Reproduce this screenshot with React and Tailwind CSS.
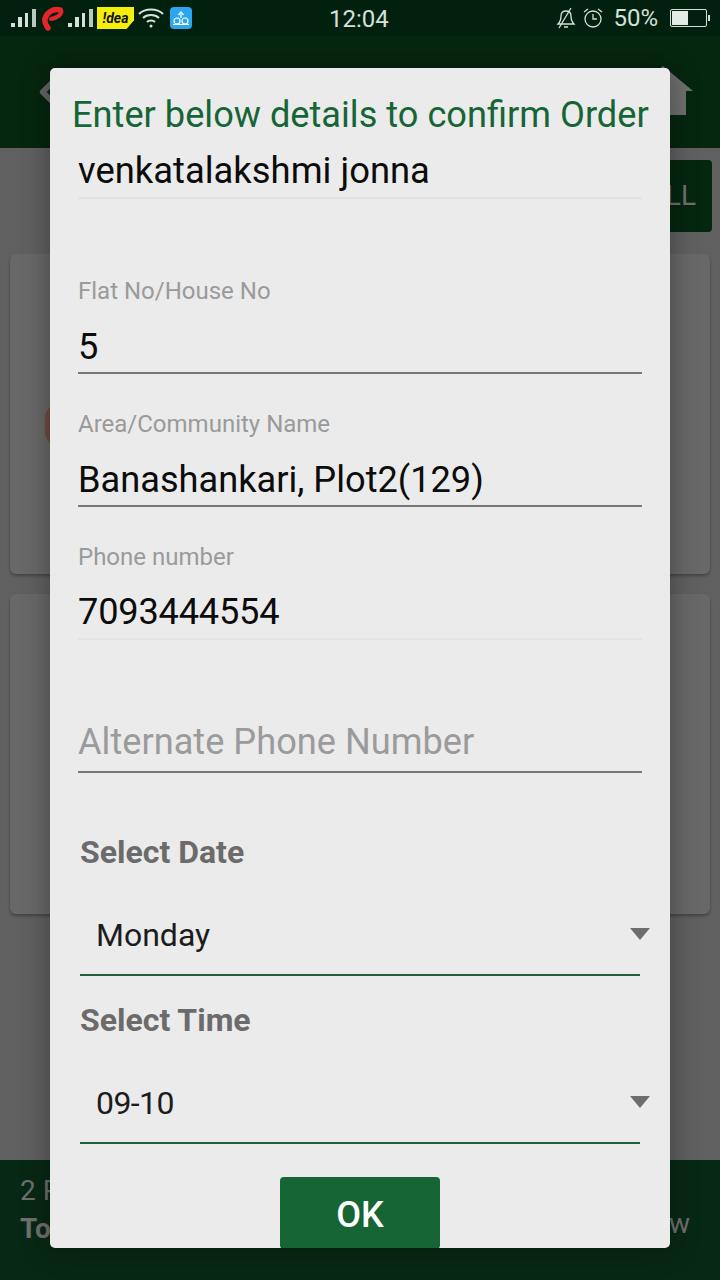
import { ChevronLeft } from 'lucide-react';

const roboto = { fontFamily: 'Roboto, sans-serif' };

function Signal() {
    return (
        <svg width="26" height="20" viewBox="0 0 26 20" fill="#d5e0da">
            <rect x="0" y="15" width="4" height="4" />
            <rect x="7" y="9" width="4" height="10" />
            <rect x="14" y="5" width="3" height="14" />
            <rect x="21" y="1" width="4" height="18" fill="#b9c9c0" />
        </svg>
    );
}

function Airtel() {
    return (
        <svg width="24" height="26" viewBox="0 0 24 26" fill="none" stroke="#e3262b" strokeLinecap="round">
            <path d="M19 5C12 3 5 8 4 14c-1 4 1 6 3 9" strokeWidth="5.5" />
            <path d="M20 5c2 4-4 8-10 9" strokeWidth="4" />
        </svg>
    );
}

function StatusBar() {
    return (
        <div className="h-9 bg-[#02200e] flex items-center justify-between pl-[11px] pr-[10px] shrink-0">
            <div className="flex items-center w-[240px]">
                <Signal />
                <div className="ml-[4px]"><Airtel /></div>
                <div className="ml-[3px]"><Signal /></div>
                <div className="ml-[3px] w-[37px] h-[22px] bg-[#f5ee0a] [clip-path:polygon(0_0,100%_0,100%_60%,80%_100%,0_100%)] flex items-center justify-center text-[14px] font-bold italic text-[#111]" style={roboto}>!dea</div>
                <svg className="ml-[4px]" width="26" height="20" viewBox="0 0 26 20" fill="none" stroke="#d5e0da" strokeWidth="2">
                    <path d="M1 6C7 0 19 0 25 6" />
                    <path d="M5 10c4-4 12-4 16 0" />
                    <path d="M9 14c2-2 6-2 8 0" />
                    <circle cx="13" cy="18" r="1.5" fill="#d5e0da" stroke="none" />
                </svg>
                <div className="ml-[6px] w-[22px] h-[22px] bg-[#2aa7ee] rounded-[4px] flex items-center justify-center">
                    <svg width="18" height="16" viewBox="0 0 18 16" fill="none" stroke="#fff" strokeWidth="1.2">
                        <circle cx="5" cy="11" r="3" />
                        <circle cx="13" cy="11" r="3" />
                        <path d="M1 14.5h16M9 8V4M6.5 5L9 2l2.5 3" />
                    </svg>
                </div>
            </div>
            <span className="text-[24px] text-[#d5e0da] absolute left-[329px] top-[1px]" style={roboto}>12:04</span>
            <div className="flex items-center">
                <svg width="20" height="22" viewBox="0 0 20 22" fill="none" stroke="#d5e0da" strokeWidth="1.3">
                    <path d="M2 17c2-2 3-4 3-8 0-3 2-5 5-5s5 2 5 5c0 4 1 6 3 8z" />
                    <path d="M8 20h4M3 21L15 1" />
                </svg>
                <svg className="ml-[7px]" width="20" height="22" viewBox="0 0 20 22" fill="none" stroke="#d5e0da" strokeWidth="1.3">
                    <circle cx="10" cy="12" r="8" />
                    <path d="M10 7v5h4M1 5l4-3M19 5l-4-3" />
                </svg>
                <span className="ml-[10px] text-[24px] text-[#d5e0da]" style={roboto}>50%</span>
                <div className="ml-[12px] w-[37px] h-[18px] border border-[#d5e0da] rounded-[2px] p-[1px]">
                    <div className="w-[16px] h-full bg-[#e3ebe6]" />
                </div>
                <div className="ml-[1px] w-[2px] h-[6px] bg-[#d5e0da]" />
            </div>
        </div>
    );
}

function Card({ thumb }) {
    return (
        <div className="h-[320px] rounded-[6px] bg-[#686868] shadow-[0_2px_3px_rgba(0,0,0,0.3)] flex items-center">
            {thumb && <div className="ml-[35px] mt-[22px] w-[30px] h-[44px] rounded-full bg-[#6e4b42]" />}
        </div>
    );
}

// the order screen that sits dimmed behind the dialog
function BackPage() {
    return (
        <div className="h-full flex flex-col">
            <StatusBar />
            <div className="h-[112px] bg-[#05260f] flex items-center justify-between pl-[30px] pr-[27px] shrink-0">
                <ChevronLeft className="text-[#666]" size={34} strokeWidth={4} />
                <svg width="60" height="49" viewBox="0 0 60 49" fill="#6f6f6f" className="mb-[3px]">
                    <path d="M30 0L60 25H53V49H7V25H0z" />
                </svg>
            </div>
            <div className="flex-1 bg-[#606060] flex flex-col">
                <div className="h-[106px] pt-[12px] pr-[8px] flex justify-end shrink-0">
                    <div className="w-[120px] h-[72px] bg-[#05260f] rounded-[4px] text-[#6f6f6f] text-[28px] flex items-center justify-end pr-[16px]" style={roboto}>CALL</div>
                </div>
                <div className="px-[10px] flex flex-col gap-[20px]">
                    <Card thumb />
                    <Card />
                </div>
            </div>
            <div className="h-[120px] bg-[#072814] shrink-0 pl-[20px] pr-[30px] pt-[12px] flex justify-between items-center" style={roboto}>
                <div className="text-[#6f6f6f] -mt-[32px]">
                    <div className="text-[28px] leading-[38px]">2 Products</div>
                    <div className="text-[28px] leading-[38px] font-bold">Total</div>
                </div>
                <div className="text-[#6f6f6f] text-[28px] -mt-[4px]">Order Now</div>
            </div>
        </div>
    );
}

function Field({ label, value, dark, valueClass }) {
    return (
        <div className="mx-[28px] h-[133px] flex flex-col justify-end">
            <div className="mb-[11px] text-[24px] leading-[28px] text-[#9a9a9a]">{label}</div>
            <div className={`pb-[2px] h-[58px] flex items-end text-[36.2px] leading-[46px] text-[#0c0c0c] border-b-2 ${dark ? 'border-[#777]' : 'border-[#e3e3e3]'} ${valueClass || ''}`}>{value}</div>
        </div>
    );
}

function SelectField({ label, value, labelMt, valueClass }) {
    return (
        <div className="mx-[30px]">
            <div className={`text-[32px] leading-[40px] font-bold text-[#6b6b6b] ${labelMt}`}>{label}</div>
            <div className="mt-[24px] h-[80px] pl-[16px] flex items-center border-b-2 border-[#1f5f3a] text-[#1c1c1c] text-[32px] relative">
                <span className={valueClass}>{value}</span>
                <svg width="20" height="12" viewBox="0 0 20 12" fill="#6e6e6e" className="absolute right-[-10px] top-[32px]">
                    <path d="M0 0H20L10 12z" />
                </svg>
            </div>
        </div>
    );
}

export default function App() {
    return (
        <div className="relative w-[720px] h-[1280px] overflow-hidden">
            <BackPage />
            <div className="absolute left-[50px] top-[68px] w-[620px] h-[1180px] bg-[#ebebeb] rounded-[5px] shadow-[0_0_28px_rgba(0,0,0,0.35)] overflow-hidden" style={roboto}>
                <div className="pl-[22px] pt-[25px] text-[36.2px] leading-[44px] text-[#156535] whitespace-nowrap">Enter below details to confirm Order</div>
                <div className="mx-[28px] h-[62px] flex items-center text-[36.4px] text-[#0c0c0c] border-b-2 border-[#e3e3e3] pt-[9px]">venkatalakshmi jonna</div>
                <div className="h-[42px]" />
                <Field label="Flat No/House No" value="5" dark />
                <Field label="Area/Community Name" value="Banashankari, Plot2(129)" dark />
                <Field label="Phone number" value="7093444554" valueClass="tracking-[-0.2px] pb-[3px]" />
                <div className="mx-[28px] h-[133px] flex items-end pb-[6px] text-[36.2px] leading-[46px] text-[#9b9b9b] border-b-2 border-[#777]">Alternate Phone Number</div>
                <SelectField label="Select Date" value="Monday" labelMt="mt-[59px]" />
                <SelectField label="Select Time" value="09-10" labelMt="mt-[24px]" valueClass="tracking-[-0.6px]" />
                <button className="block mx-auto mt-[33px] w-[160px] h-[72px] pt-[3px] bg-[#156535] rounded-[4px] text-white text-[36px] font-medium" style={roboto}>OK</button>
            </div>
        </div>
    );
}
